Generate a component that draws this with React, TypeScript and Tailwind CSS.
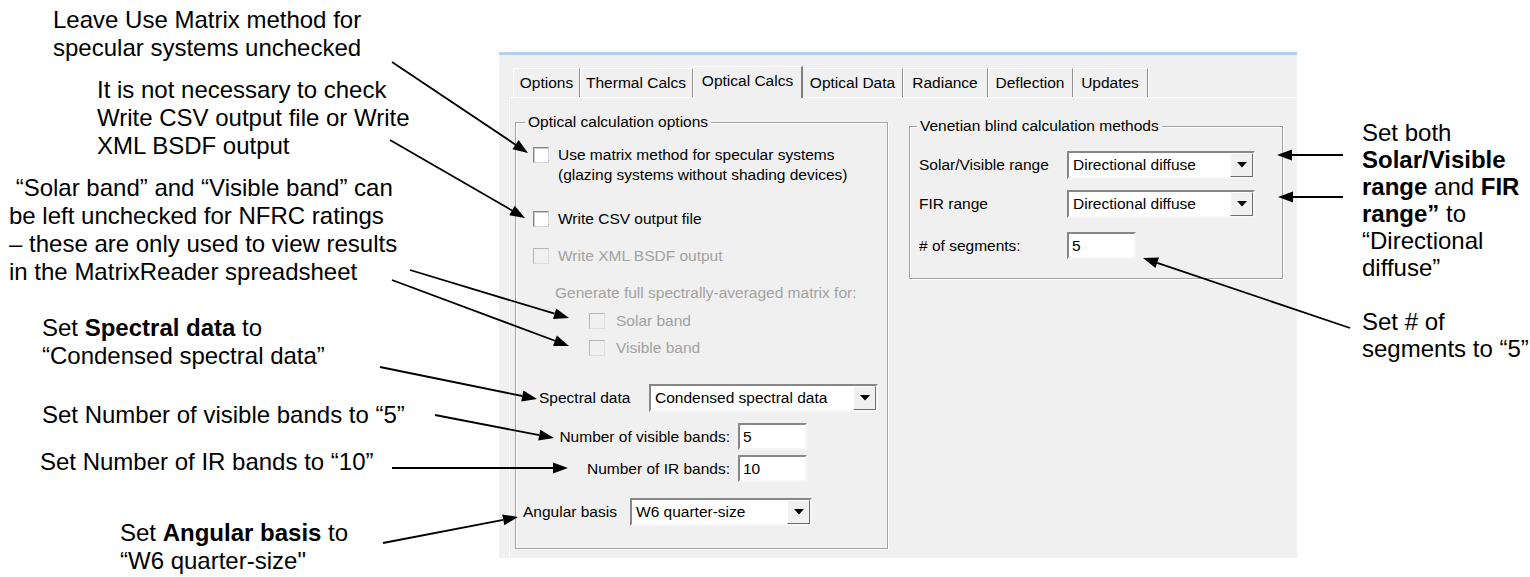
import type { ReactNode } from 'react'

// ============================================
// Classic Windows controls
// ============================================

function CheckBox({ disabled = false }: { disabled?: boolean }) {
  return (
    <span
      className={`block w-[16px] h-[16px] shrink-0 border ${
        disabled
          ? 'bg-[#f0f0f0] border-[#b4b4b4] border-b-[#dcdcdc] border-r-[#dcdcdc]'
          : 'bg-white border-[#868686] border-b-[#d4d4d4] border-r-[#d4d4d4] shadow-[inset_1px_1px_0_#c8c8c8]'
      }`}
      aria-hidden="true"
    />
  )
}

function Combo({ value, width }: { value: string; width: string }) {
  return (
    <div
      className={`flex h-[28px] ${width} border-2 border-[#f6f6f6] border-t-[#878787] border-l-[#878787] bg-white`}
    >
      <span className="flex-1 pl-[4px] leading-[24px] whitespace-nowrap overflow-hidden">{value}</span>
      <span className="flex w-[23px] items-center justify-center border border-white border-b-[#6d6d6d] border-r-[#6d6d6d] bg-[#f0f0f0]">
        <svg width="10" height="6" viewBox="0 0 10 6">
          <polygon points="0,0 10,0 5,5.5" fill="#000" />
        </svg>
      </span>
    </div>
  )
}

function TextBox({ value }: { value: string }) {
  return (
    <div className="h-[27px] w-[69px] border-2 border-[#f6f6f6] border-t-[#878787] border-l-[#878787] bg-white pl-[3px] leading-[23px]">
      {value}
    </div>
  )
}

function GroupBox({ title, className = '', children }: { title: string; className?: string; children: ReactNode }) {
  return (
    <fieldset
      className={`border border-[#a3a3a3] shadow-[inset_1px_1px_0_#ffffff,1px_1px_0_#ffffff] ${className}`}
    >
      <legend className="px-[3px] leading-[20px] bg-[#f0f0f0]">{title}</legend>
      {children}
    </fieldset>
  )
}

const tabs: { label: string; width: string }[] = [
  { label: 'Options', width: 'w-[67px]' },
  { label: 'Thermal Calcs', width: 'w-[113px]' },
  { label: 'Optical Calcs', width: 'w-[110px]' },
  { label: 'Optical Data', width: 'w-[100px]' },
  { label: 'Radiance', width: 'w-[85px]' },
  { label: 'Deflection', width: 'w-[85px]' },
  { label: 'Updates', width: 'w-[75px]' },
]

function TabStrip({ active }: { active: string }) {
  return (
    <div className="flex h-[42px] items-end pl-[14px]">
      {tabs.map((tab, i) =>
        tab.label === active ? (
          <div
            key={tab.label}
            className={`relative z-10 -mb-px flex h-[32px] ${tab.width} items-center justify-center border-l border-t border-white border-r-2 border-r-[#7d7d7d] bg-[#f0f0f0] pb-[4px]`}
          >
            {tab.label}
          </div>
        ) : (
          <div
            key={tab.label}
            className={`flex h-[29px] ${tab.width} items-center justify-center border-t border-white border-r border-r-[#8e8e8e] shadow-[1px_0_0_#ffffff] ${
              i === 0 ? 'border-l' : ''
            }`}
          >
            {tab.label}
          </div>
        )
      )}
    </div>
  )
}

// ============================================
// Dialog
// ============================================

function OpticalCalcsDialog() {
  return (
    <div className="flex h-[506px] w-[798px] flex-col border-t-[3px] border-[#b7cfea] bg-[#f0f0f0] text-[15.5px] text-black font-['Liberation_Sans',Arial,sans-serif]">
      <TabStrip active="Optical Calcs" />

      <div className="ml-[10px] flex flex-1 items-start gap-[21px] border-l border-t border-white pl-[5px]">
        {/* Optische Berechnung */}
        <GroupBox title="Optical calculation options" className="mt-[14px] w-[373px] pb-[22px] [&>legend]:ml-[9px]">
          <div className="mt-[13px] flex items-start gap-[9px] pl-[17px] leading-[20px]">
            <span className="mt-[2px]">
              <CheckBox />
            </span>
            <span>
              Use matrix method for specular systems
              <br />
              (glazing systems without shading devices)
            </span>
          </div>

          <div className="mt-[24px] flex h-[20px] items-center gap-[9px] pl-[17px]">
            <CheckBox />
            <span>Write CSV output file</span>
          </div>

          <div className="mt-[17px] flex h-[20px] items-center gap-[9px] pl-[17px] text-[#a2a2a2]">
            <CheckBox disabled />
            <span>Write XML BSDF output</span>
          </div>

          <div className="mt-[17px] h-[20px] pl-[39px] leading-[20px] text-[#a2a2a2]">
            Generate full spectrally-averaged matrix for:
          </div>
          <div className="mt-[8px] flex h-[20px] items-center gap-[11px] pl-[73px] text-[#a2a2a2]">
            <CheckBox disabled />
            <span>Solar band</span>
          </div>
          <div className="mt-[7px] flex h-[20px] items-center gap-[11px] pl-[73px] text-[#a2a2a2]">
            <CheckBox disabled />
            <span>Visible band</span>
          </div>

          <div className="mt-[26px] flex items-center pl-[23px]">
            <span className="w-[110px]">Spectral data</span>
            <Combo value="Condensed spectral data" width="w-[229px]" />
          </div>

          <div className="mt-[11px] flex items-center">
            <span className="w-[214px] text-right">Number of visible bands:</span>
            <span className="ml-[8px]">
              <TextBox value="5" />
            </span>
          </div>
          <div className="mt-[5px] flex items-center">
            <span className="w-[214px] text-right">Number of IR bands:</span>
            <span className="ml-[8px]">
              <TextBox value="10" />
            </span>
          </div>

          <div className="mt-[16px] flex items-center pl-[7px]">
            <span className="w-[107px]">Angular basis</span>
            <Combo value="W6 quarter-size" width="w-[182px]" />
          </div>
        </GroupBox>

        {/* Jalousie-Berechnung */}
        <GroupBox title="Venetian blind calculation methods" className="mt-[18px] w-[374px] pb-[19px] [&>legend]:ml-[7px]">
          <div className="mt-[15px] flex items-center pl-[9px]">
            <span className="w-[148px]">Solar/Visible range</span>
            <Combo value="Directional diffuse" width="w-[188px]" />
          </div>
          <div className="mt-[11px] flex items-center pl-[9px]">
            <span className="w-[148px]">FIR range</span>
            <Combo value="Directional diffuse" width="w-[188px]" />
          </div>
          <div className="mt-[14px] flex items-center pl-[9px]">
            <span className="w-[148px]">
              # of segments:
            </span>
            <TextBox value="5" />
          </div>
        </GroupBox>
      </div>
    </div>
  )
}

// ============================================
// Callout arrows
// ============================================

const arrows: [number, number, number, number][] = [
  [392, 62, 528, 153],
  [390, 140, 525, 218],
  [410, 270, 569, 318],
  [392, 280, 569, 346],
  [380, 367, 537, 399],
  [435, 415, 554, 438],
  [392, 468, 568, 468],
  [383, 543, 518, 517],
  [1343, 155, 1277, 155],
  [1343, 197, 1278, 197],
  [1350, 328, 1143, 258],
]

function Arrow({ x1, y1, x2, y2 }: { x1: number; y1: number; x2: number; y2: number }) {
  const a = Math.atan2(y2 - y1, x2 - x1)
  const len = 15
  const half = 5.5
  const bx = x2 - len * Math.cos(a)
  const by = y2 - len * Math.sin(a)
  const px = -Math.sin(a) * half
  const py = Math.cos(a) * half
  return (
    <g>
      <line x1={x1} y1={y1} x2={bx} y2={by} stroke="#000" strokeWidth={1.8} />
      <polygon points={`${x2},${y2} ${bx + px},${by + py} ${bx - px},${by - py}`} fill="#000" />
    </g>
  )
}

// ============================================
// Page
// ============================================

export default function App() {
  return (
    <div className="relative h-[577px] w-[1530px] overflow-hidden bg-white pl-[499px] pt-[52px]">
      <OpticalCalcsDialog />

      <div className="absolute inset-0 text-[24px] text-black font-['Liberation_Sans',Arial,sans-serif] whitespace-nowrap">
        <div className="absolute left-[53px] top-[6px] leading-[28px]">
          Leave Use Matrix method for
          <br />
          specular systems unchecked
        </div>
        <div className="absolute left-[97px] top-[76px] leading-[28px]">
          It is not necessary to check
          <br />
          Write CSV output file or Write
          <br />
          XML BSDF output
        </div>
        <div className="absolute left-[9px] top-[174px] leading-[28px]">
          &nbsp;“Solar band” and “Visible band” can
          <br />
          be left unchecked for NFRC ratings
          <br />
          – these are only used to view results
          <br />
          in the MatrixReader spreadsheet
        </div>
        <div className="absolute left-[42px] top-[314px] leading-[28px]">
          Set <b>Spectral data</b> to
          <br />
          “Condensed spectral data”
        </div>
        <div className="absolute left-[42px] top-[401px] leading-[28px]">Set Number of visible bands to “5”</div>
        <div className="absolute left-[40px] top-[448px] leading-[28px]">Set Number of IR bands to “10”</div>
        <div className="absolute left-[120px] top-[519px] leading-[28px]">
          Set <b>Angular basis</b> to
          <br />
          “W6 quarter-size"
        </div>

        <div className="absolute left-[1362px] top-[119px] leading-[27px]">
          Set both
          <br />
          <b>Solar/Visible</b>
          <br />
          <b>range</b> and <b>FIR</b>
          <br />
          <b>range”</b> to
          <br />
          “Directional
          <br />
          diffuse”
        </div>
        <div className="absolute left-[1362px] top-[308px] leading-[27px]">
          Set # of
          <br />
          segments to “5”
        </div>
      </div>

      <svg className="pointer-events-none absolute inset-0" width="1530" height="577" viewBox="0 0 1530 577">
        {arrows.map(([x1, y1, x2, y2], i) => (
          <Arrow key={i} x1={x1} y1={y1} x2={x2} y2={y2} />
        ))}
      </svg>
    </div>
  )
}
